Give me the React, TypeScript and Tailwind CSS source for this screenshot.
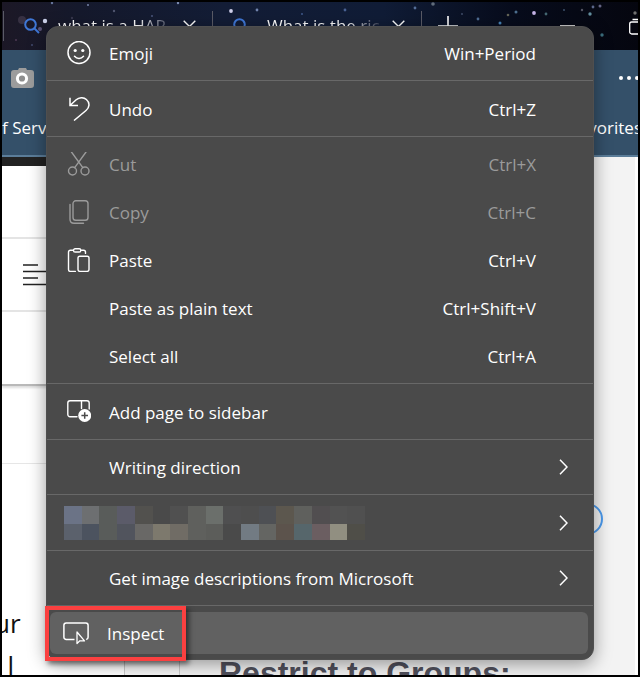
import type { ReactNode } from "react";

const stars = [
  [20, 18, 4, "#7a6a80", 0.3], [43, 19, 2.2, "#dfe6ff", 0.9], [38, 27, 2, "#8a7fae", 0.6], [50, 1, 1.2, "#9db4e8", 0.6],
  [86, 3, 1, "#9fb0d8", 0.7], [112, 9, 1.2, "#8c8fb0", 0.5], [150, 14, 1, "#7f93c8", 0.5], [176, 1, 1.2, "#a8bce8", 0.7],
  [229, 9, 1.9, "#e6e4ff", 0.9], [255, 8, 1.4, "#9ab0e0", 0.7], [242, 20, 1, "#8194cc", 0.5], [300, 12, 1.1, "#5878b8", 0.6],
  [343, 8, 1.4, "#6f90d0", 0.6], [413, 6, 1.4, "#7393c4", 0.7], [431, 2, 1.8, "#9aa6b0", 0.6], [460, 12, 1.1, "#6b7ca0", 0.5],
  [476, 17, 1.4, "#6e96c4", 0.7], [498, 21, 1.5, "#4f90c8", 0.9], [506, 13, 1.3, "#8a8a70", 0.7], [514, 10, 1.5, "#6b9ac0", 0.7],
  [532, 11, 1.9, "#dcc8ff", 0.9], [544, 12, 1.4, "#5f9098", 0.7], [562, 8, 1, "#6080a0", 0.6], [580, 8, 1.2, "#667", 0.8],
  [588, 12, 1.7, "#7ab0c0", 0.8], [591, 5, 1.4, "#7080a8", 0.8], [598, 4, 1.5, "#7c7ca0", 0.8], [600, 33, 1.7, "#4a8898", 0.8],
  [633, 11, 1.7, "#8c8c88", 0.8], [14, 38, 1, "#805c80", 0.5], [30, 43, 1, "#6878b0", 0.5], [70, 16, 1.2, "#6a6482", 0.4],
] as const;

function Starfield() {
  return (
    <svg className="absolute inset-0 h-full w-full" viewBox="0 0 636 48" preserveAspectRatio="xMidYMid slice" aria-hidden="true">
      <defs>
        <linearGradient id="sky">
          <stop offset="0" stopColor="#1c1826" />
          <stop offset=".12" stopColor="#15192c" />
          <stop offset=".35" stopColor="#131d36" />
          <stop offset=".6" stopColor="#101c36" />
          <stop offset=".8" stopColor="#070c1c" />
          <stop offset="1" stopColor="#05060f" />
        </linearGradient>
      </defs>
      <rect width="636" height="48" fill="url(#sky)" />
      {stars.map(([x, y, r, c, o]) => (
        <circle key={`${x}-${y}`} cx={x} cy={y} r={r} fill={c} opacity={o} />
      ))}
    </svg>
  );
}

function Tab({ title }: { title: string }) {
  return (
    <div className="flex h-full w-[209px] shrink-0 items-center">
      <span className="h-[30px] w-px bg-[#5a5b66]" />
      <svg className="ml-5 shrink-0" width="16" height="16" viewBox="0 0 16 16" fill="none" stroke="#3f77d6" strokeWidth="2" aria-hidden="true">
        <circle cx="6.5" cy="6.5" r="5.3" />
        <path d="M10.5 10.5 15 15" />
      </svg>
      <button className="ml-[18px] h-[26px] w-[114px] bg-linear-to-r from-white from-70% to-[#3a4055] bg-clip-text text-left text-[17px] leading-[26px] whitespace-nowrap text-transparent">
        {title}
      </button>
      <button className="mr-4 ml-auto" aria-label={`Close ${title}`}>
        <svg width="13" height="13" viewBox="0 0 13 13" fill="none" stroke="#fff" strokeWidth="1.4">
          <path d="m.7.7 11.6 11.6M12.3.7.7 12.3" />
        </svg>
      </button>
    </div>
  );
}

function Icon({ children }: { children: ReactNode }) {
  return (
    <svg className="h-6 w-6" viewBox="0 0 24 24" fill="none" stroke="currentColor" strokeWidth="1.4" strokeLinecap="round" strokeLinejoin="round" aria-hidden="true">
      {children}
    </svg>
  );
}

const emojiIcon = (
  <Icon>
    <circle cx="12" cy="11.5" r="11" strokeWidth="1.5" />
    <circle cx="8.2" cy="9.5" r="1.6" fill="currentColor" stroke="none" />
    <circle cx="15.8" cy="9.5" r="1.6" fill="currentColor" stroke="none" />
    <path d="M7.5 15.3c2.4 2.9 6.6 2.9 9 0" strokeWidth="1.5" />
  </Icon>
);
const undoIcon = (
  <Icon>
    <path d="M3 .7v7.8h8M3.2 8.2l6-5.4c3.2-2.8 7.6-2.6 10.2-.3 3.8 3.3 3.2 8-.4 11L7 23.5" strokeWidth="1.5" strokeLinecap="butt" strokeLinejoin="miter" />
  </Icon>
);
const cutIcon = (
  <Icon>
    <circle cx="5.5" cy="19" r="4" />
    <circle cx="18" cy="19" r="4" />
    <path d="M4.5 0 15.8 15.7M19 0 7.7 15.7" />
  </Icon>
);
const copyIcon = (
  <Icon>
    <rect x="6" y=".8" width="15" height="19.5" rx="2.8" />
    <path d="M3 4.5v14.7c0 2.4 1.7 4 4 4h9.5" />
  </Icon>
);
const pasteIcon = (
  <Icon>
    <path d="M6 2.3H3.4c-1.1 0-1.9.8-1.9 1.9v17.3c0 1.1.8 1.9 1.9 1.9h5M14.2 2.3h2.4c1.1 0 1.9.8 1.9 1.9v1.2" />
    <rect x="6.5" y=".8" width="7.3" height="3.2" rx="1.6" />
    <rect x="11" y="8.2" width="11" height="15.2" rx="1.8" />
  </Icon>
);
const sidebarIcon = (
  <Icon>
    <path d="M10 16.7H3A2.2 2.2 0 0 1 .8 14.5V2.9C.8 1.7 1.8.7 3 .7h17c1.2 0 2.2 1 2.2 2.2V9M14.5.7v7.8" />
    <circle cx="17.7" cy="15.5" r="6.5" fill="#fff" stroke="none" />
    <path d="M17.7 12.2v6.6M14.4 15.5H21" stroke="#4a4a4a" strokeWidth="1.5" strokeLinecap="butt" />
  </Icon>
);
const inspectIcon = (
  <svg className="h-6 w-[26px]" viewBox="0 0 26 24" fill="none" stroke="#fff" strokeWidth="1.5" strokeLinejoin="round" aria-hidden="true">
    <path d="M11.5 18.5H3.2A2.3 2.3 0 0 1 .9 16.2V4.2c0-1.3 1-2.3 2.3-2.3h19.6c1.3 0 2.3 1 2.3 2.3v12c0 1.2-.8 2.1-1.9 2.3" />
    <path d="M14 11v11.6l2.8-2.8 4.7.1z" strokeWidth="1.3" />
  </svg>
);

type ItemProps = { label?: string; icon?: ReactNode; keys?: string; submenu?: boolean; disabled?: boolean; children?: ReactNode };

function Item({ label, icon, keys, submenu, disabled, children }: ItemProps) {
  return (
    <button
      role="menuitem"
      disabled={disabled}
      aria-label={label ?? "Redacted entry"}
      className="flex h-12 w-full items-center pr-[57px] pl-5 text-white disabled:text-[#9b9b9b]"
    >
      {children ?? (
        <>
          <span className="w-[42px] shrink-0">{icon}</span>
          <span className="pt-px">{label}</span>
        </>
      )}
      {keys && <span className="ml-auto pt-px">{keys}</span>}
      {submenu && (
        <svg className="-mr-8 ml-auto" width="9" height="16" viewBox="0 0 9 16" fill="none" stroke="#fff" strokeWidth="1.5" aria-hidden="true">
          <path d="m1 .8 7 7.2-7 7.2" />
        </svg>
      )}
    </button>
  );
}

function Divider({ roomy }: { roomy?: boolean }) {
  return <div role="separator" className={`mt-[3px] h-px bg-[#686868] ${roomy ? "mb-1" : "mb-[3px]"}`} />;
}

const mosaic = [
  "bg-[#6b7386]", "bg-[#6d6f71]", "bg-[#595c5a]", "bg-[#5b5b69]", "bg-[#52514e]", "bg-[#4a4a4a]", "bg-[#505050]", "bg-[#5f605d]", "bg-[#6b6f6b]",
  "bg-[#4f4f50]", "bg-[#4e4e4e]", "bg-[#4e5054]", "bg-[#5c574e]", "bg-[#5f605d]", "bg-[#514e50]", "bg-[#525252]", "bg-[#505050]",
  "bg-[#5b616c]", "bg-[#4c535f]", "bg-[#595c5a]", "bg-[#51545d]", "bg-[#696866]", "bg-[#7d796d]", "bg-[#706c65]", "bg-[#5f605d]", "bg-[#5c5d5a]",
  "bg-[#4a4a4a]", "bg-[#727b83]", "bg-[#646562]", "bg-[#5c534c]", "bg-[#56666b]", "bg-[#6b5e61]", "bg-[#918f81]", "bg-[#4f4e48]",
];

function ContextMenu() {
  return (
    <div role="menu" className="absolute top-6 right-11 left-11 rounded-xl border border-[#4f4f4f] bg-[#4a4a4a] pt-[2px] pb-[5px] text-[17px] leading-6 shadow-[0_4px_18px_rgba(0,0,0,0.4)]">
      <Item icon={emojiIcon} label="Emoji" keys="Win+Period" />
      <Divider roomy />
      <Item icon={undoIcon} label="Undo" keys="Ctrl+Z" />
      <Divider />
      <Item icon={cutIcon} label="Cut" keys="Ctrl+X" disabled />
      <Item icon={copyIcon} label="Copy" keys="Ctrl+C" disabled />
      <Item icon={pasteIcon} label="Paste" keys="Ctrl+V" />
      <Item label="Paste as plain text" keys="Ctrl+Shift+V" />
      <Item label="Select all" keys="Ctrl+A" />
      <Divider roomy />
      <Item icon={sidebarIcon} label="Add page to sidebar" />
      <Divider />
      <Item label="Writing direction" submenu />
      <Divider roomy />
      <Item submenu>
        <span className="-ml-[3px] grid w-[301px] grid-cols-[repeat(17,1fr)] grid-rows-[18px_16px]">
          {mosaic.map((tone, i) => (
            <span key={i} className={tone} />
          ))}
        </span>
      </Item>
      <Divider />
      <Item label="Get image descriptions from Microsoft" submenu />
      <Divider roomy />
      <div className="relative mt-[6px] mr-[5px] ml-[3px]">
        <button role="menuitem" className="flex h-[42px] w-full items-center rounded-md bg-[#616161] pl-[13px] text-white">
          <span className="w-11 shrink-0">{inspectIcon}</span>
          <span className="pt-px">Inspect</span>
        </button>
        <div className="pointer-events-none absolute -top-[6px] -left-[5px] h-[55px] w-[141px] border-4 border-[#fb4040] shadow-[3px_3px_5px_rgba(0,0,0,0.5)]" />
      </div>
    </div>
  );
}

export default function App() {
  return (
    <div className="relative flex h-screen flex-col overflow-hidden border-2 border-black bg-white font-['Open_Sans','Noto_Sans',sans-serif]">
      <header className="shrink-0">
        <div className="relative h-12 overflow-hidden">
          <Starfield />
          <div className="relative flex h-full items-center pl-px">
            <Tab title="what is a HAR" />
            <Tab title="What is the ric" />
            <span className="h-[30px] w-px shrink-0 bg-[#5a5b66]" />
            <button className="ml-4 shrink-0" aria-label="New tab">
              <svg width="20" height="20" viewBox="0 0 20 20" stroke="#fff" strokeWidth="1.6">
                <path d="M10 0v20M0 10h20" />
              </svg>
            </button>
            <button className="ml-auto shrink-0" aria-label="Minimize">
              <svg width="15" height="2" viewBox="0 0 15 2">
                <path d="M0 1h15" stroke="#ccc" strokeWidth="2" />
              </svg>
            </button>
            <button className="-mr-2 ml-[54px] shrink-0" aria-label="Restore window">
              <svg width="17" height="17" viewBox="0 0 17 17" fill="none" stroke="#fff" strokeWidth="1.3">
                <rect x=".7" y="4" width="12" height="12" rx="2" />
                <path d="M3.5 1.5h9a3 3 0 0 1 3 3v8" />
              </svg>
            </button>
          </div>
        </div>
        <div className="flex h-[107px] flex-col border-b-2 border-[#5b7d99] bg-[#345069] text-[17px] leading-6 text-white">
          <div className="flex h-14 items-center justify-between pl-[9px]">
            <button aria-label="Screenshot">
              <svg width="23" height="20" viewBox="0 0 23 20">
                <path d="M3 2h4l1-2h7l1 2h4a3 3 0 0 1 3 3v12a3 3 0 0 1-3 3H3a3 3 0 0 1-3-3V5a3 3 0 0 1 3-3Z" fill="#9c9c9c" />
                <circle cx="11" cy="10.5" r="4.6" fill="#8e8e8e" stroke="#fff" strokeWidth="3" />
              </svg>
            </button>
            <button className="-mr-[2px]" aria-label="Settings and more">
              <svg width="21" height="4" viewBox="0 0 21 4" fill="#fff">
                <circle cx="2" cy="2" r="2" />
                <circle cx="10" cy="2" r="2" />
                <circle cx="18" cy="2" r="2" />
              </svg>
            </button>
          </div>
          <div className="flex h-[44px] items-center justify-between">
            <a href="#terms" className="whitespace-nowrap">f Serv</a>
            <a href="#favorites" className="-mr-1 whitespace-nowrap">vorites</a>
          </div>
        </div>
      </header>

      <div className="flex min-h-0 flex-1">
        <main className="w-[122px] shrink-0 overflow-hidden bg-white">
          <div className="h-[9px] bg-[#222]" />
          <div className="h-[73px] border-b-2 border-[#e4e4e4]" />
          <div className="flex h-[73px] items-center border-b-2 border-[#e4e4e4] pl-[21px]">
            <svg width="30" height="22" viewBox="0 0 30 22" stroke="#222" strokeWidth="1.7" aria-hidden="true">
              <path d="M0 1h15M0 7.5h30M0 14h15M0 20.5h30" />
            </svg>
          </div>
          <div className="h-[74px] border-b-2 border-[#b9b9b9] shadow-[0_2px_2px_#ddd]" />
          <div className="h-[78px] border-b border-[#e6e6e6]" />
          <p className="-ml-2 pt-[138px] text-[26px] leading-[42px] text-[#111]">ur<br />&nbsp;&nbsp;l</p>
        </main>
        <div className="w-14 shrink-0 border-x border-[#ccc] bg-[#f7f7f7]" />
        <aside className="relative flex min-w-0 flex-1 flex-col justify-end overflow-hidden border-r-3 border-white bg-[#f3f3f3]">
          <button aria-label="Help" className="absolute top-[346px] right-8 h-8 w-8 rounded-full border-2 border-[#4b9bef]" />
          <h2 className="-mb-4 pl-[39px] font-['Liberation_Sans',sans-serif] text-[32px] leading-9 font-bold whitespace-nowrap text-[#50505c]">Restrict to Groups:</h2>
        </aside>
      </div>
      <ContextMenu />
    </div>
  );
}
